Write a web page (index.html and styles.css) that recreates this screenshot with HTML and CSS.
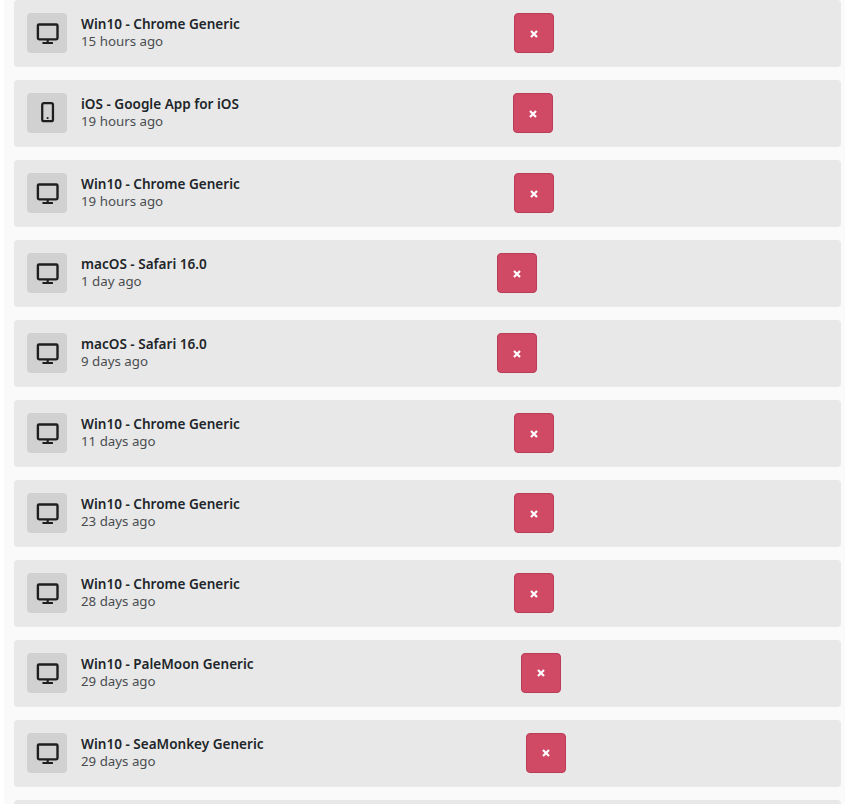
FILE: index.html
```html
<!DOCTYPE html>
<html lang="en">
<head>
  <meta charset="UTF-8">
  <meta name="viewport" content="width=device-width, initial-scale=1.0">
  <title>Sessions</title>
  <link rel="stylesheet" href="styles.css">
</head>
<body>
  <svg class="defs" width="0" height="0">
    <symbol id="desktop" viewBox="0 0 24 24">
      <rect x="3.6" y="4.1" width="18.1" height="13.8" rx="1.2" fill="none" stroke="currentColor" stroke-width="2.2"/>
      <path d="M12.65 18v3.2M7.8 21.2h9.7" fill="none" stroke="currentColor" stroke-width="2"/>
    </symbol>
    <symbol id="phone" viewBox="0 0 24 24">
      <rect x="7.6" y="2.9" width="9.9" height="16.7" rx="1.6" fill="none" stroke="currentColor" stroke-width="2.1"/>
      <circle cx="12.55" cy="16.6" r="1" fill="currentColor"/>
    </symbol>
    <symbol id="close" viewBox="0 0 10 10">
      <path d="M2 2l6 6M8 2l-6 6" fill="none" stroke="currentColor" stroke-width="2.2"/>
    </symbol>
  </svg>

  <div class="sessions">
    <div class="session">
      <div class="info">
        <div class="device"><svg><use href="#desktop"/></svg></div>
        <div class="text"><div class="name">Win10 - Chrome Generic</div><div class="time">15 hours ago</div></div>
      </div>
      <button class="revoke"><svg><use href="#close"/></svg></button>
      <div></div>
    </div>
    <div class="session">
      <div class="info">
        <div class="device"><svg><use href="#phone"/></svg></div>
        <div class="text"><div class="name">iOS - Google App for iOS</div><div class="time">19 hours ago</div></div>
      </div>
      <button class="revoke"><svg><use href="#close"/></svg></button>
      <div></div>
    </div>
    <div class="session">
      <div class="info">
        <div class="device"><svg><use href="#desktop"/></svg></div>
        <div class="text"><div class="name">Win10 - Chrome Generic</div><div class="time">19 hours ago</div></div>
      </div>
      <button class="revoke"><svg><use href="#close"/></svg></button>
      <div></div>
    </div>
    <div class="session">
      <div class="info">
        <div class="device"><svg><use href="#desktop"/></svg></div>
        <div class="text"><div class="name">macOS - Safari 16.0</div><div class="time">1 day ago</div></div>
      </div>
      <button class="revoke"><svg><use href="#close"/></svg></button>
      <div></div>
    </div>
    <div class="session">
      <div class="info">
        <div class="device"><svg><use href="#desktop"/></svg></div>
        <div class="text"><div class="name">macOS - Safari 16.0</div><div class="time">9 days ago</div></div>
      </div>
      <button class="revoke"><svg><use href="#close"/></svg></button>
      <div></div>
    </div>
    <div class="session">
      <div class="info">
        <div class="device"><svg><use href="#desktop"/></svg></div>
        <div class="text"><div class="name">Win10 - Chrome Generic</div><div class="time">11 days ago</div></div>
      </div>
      <button class="revoke"><svg><use href="#close"/></svg></button>
      <div></div>
    </div>
    <div class="session">
      <div class="info">
        <div class="device"><svg><use href="#desktop"/></svg></div>
        <div class="text"><div class="name">Win10 - Chrome Generic</div><div class="time">23 days ago</div></div>
      </div>
      <button class="revoke"><svg><use href="#close"/></svg></button>
      <div></div>
    </div>
    <div class="session">
      <div class="info">
        <div class="device"><svg><use href="#desktop"/></svg></div>
        <div class="text"><div class="name">Win10 - Chrome Generic</div><div class="time">28 days ago</div></div>
      </div>
      <button class="revoke"><svg><use href="#close"/></svg></button>
      <div></div>
    </div>
    <div class="session">
      <div class="info">
        <div class="device"><svg><use href="#desktop"/></svg></div>
        <div class="text"><div class="name">Win10 - PaleMoon Generic</div><div class="time">29 days ago</div></div>
      </div>
      <button class="revoke"><svg><use href="#close"/></svg></button>
      <div></div>
    </div>
    <div class="session">
      <div class="info">
        <div class="device"><svg><use href="#desktop"/></svg></div>
        <div class="text"><div class="name">Win10 - SeaMonkey Generic</div><div class="time">29 days ago</div></div>
      </div>
      <button class="revoke"><svg><use href="#close"/></svg></button>
      <div></div>
    </div>
    <div class="session"></div>
  </div>
</body>
</html>
```

FILE: styles.css
```css
html, body {
  height: 804px;
  overflow: hidden;
}
body {
  margin: 0;
  background-color: #ffffff;
  font-family: "Noto Sans", sans-serif;
  color: #212529;
}
.defs {
  display: block;
  position: absolute;
}
.sessions {
  display: flex;
  flex-direction: column;
  gap: 13px;
  height: 804px;
  margin-left: 4px;
  padding: 0 4px 0 10px;
  overflow: hidden;
  background-color: #fafafa;
}
.session {
  display: flex;
  justify-content: space-between;
  align-items: center;
  flex-shrink: 0;
  height: 67px;
  padding: 13px 13px 14px;
  box-sizing: border-box;
  background-color: #e8e8e8;
  border-radius: 4px;
}
.info {
  display: flex;
  align-items: center;
  gap: 14px;
}
.device {
  display: flex;
  align-items: center;
  justify-content: center;
  width: 40px;
  height: 40px;
  background-color: #d1d1d1;
  border-radius: 4px;
  color: #1e1e1e;
}
.device svg {
  width: 26px;
  height: 26px;
}
.name {
  font-size: 13.55px;
  font-weight: 600;
  line-height: 17px;
}
.time {
  font-size: 13.3px;
  line-height: 17px;
  color: #4a4d50;
}
.revoke {
  display: flex;
  align-items: center;
  justify-content: center;
  width: 40px;
  height: 40px;
  padding: 0;
  background-color: #d04a66;
  border: 1px solid #bb3c58;
  border-radius: 4px;
  color: #ffffff;
}
.revoke svg {
  width: 10px;
  height: 10px;
  margin-top: 2px;
}
.session:nth-child(n+9) .revoke svg {
  margin-top: 0;
}
```
